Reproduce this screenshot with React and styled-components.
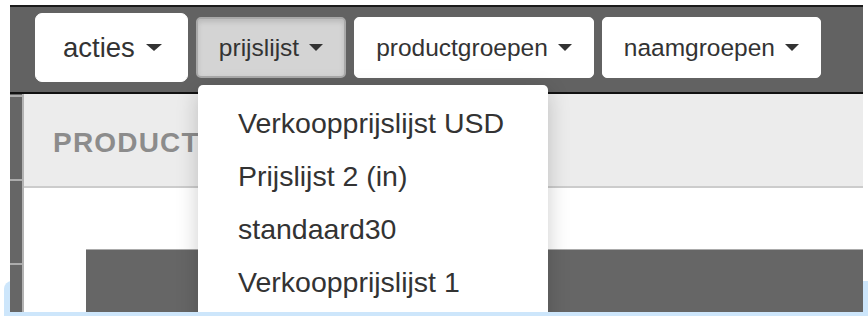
import React from 'react';
import styled, { createGlobalStyle } from 'styled-components';

const GlobalStyle = createGlobalStyle`
  html, body {
    margin: 0;
    padding: 0;
    background: #ffffff;
    font-family: "Liberation Sans", Arial, sans-serif;
  }
`;

const Page = styled.div`
  position: relative;
  width: 868px;
  height: 316px;
  overflow: hidden;
  background: #ffffff;
`;

const FocusGlow = styled.div`
  position: absolute;
  left: 4px;
  top: 281px;
  right: -12px;
  height: 80px;
  background: #cde6fb;
  border-radius: 8px;
`;

const Frame = styled.div`
  position: relative;
  z-index: 1;
  margin: 5px 5px 0 10px;
  height: 307px;
  overflow: hidden;
  display: flex;
  flex-direction: column;
`;

const Toolbar = styled.div`
  display: flex;
  align-items: center;
  gap: 8px;
  height: 69px;
  padding: 6px 0 10px 25px;
  background: #626262;
  border-top: 2px solid #1c1c1c;
  border-bottom: 2px solid #111111;
`;

const Button = styled.button`
  display: flex;
  align-items: center;
  gap: ${(p) => (p.$large ? '11px' : '10px')};
  height: ${(p) => (p.$large ? '69px' : '61px')};
  padding: ${(p) => (p.$large ? '0 25px 0 27px' : '0 21px')};
  font-family: "Liberation Sans", Arial, sans-serif;
  font-size: ${(p) => (p.$large ? '27.5px' : '24.5px')};
  color: #333333;
  background: ${(p) => (p.$active ? '#d4d4d4' : '#ffffff')};
  border: ${(p) => (p.$active ? '2px solid #a9a9a9' : '1px solid #ffffff')};
  border-radius: ${(p) => (p.$large ? '7px' : '5px')};
  box-shadow: ${(p) => (p.$active ? 'inset 0 3px 5px rgba(0,0,0,0.12)' : 'none')};
  cursor: pointer;
`;

const Caret = styled.span`
  width: 0;
  height: 0;
  border-left: ${(p) => (p.$large ? '8.5px' : '7px')} solid transparent;
  border-right: ${(p) => (p.$large ? '8.5px' : '7px')} solid transparent;
  border-top: 7px solid #333333;
`;

const Body = styled.div`
  flex: 1;
  display: flex;
  min-height: 0;
`;

const Sidebar = styled.div`
  width: 12px;
  flex-shrink: 0;
  border-right: 2px solid #b3b3b3;
  background: repeating-linear-gradient(
    to bottom,
    #666666 0,
    #666666 1px,
    #acacac 1px,
    #acacac 3px,
    #666666 3px,
    #666666 84px
  );
`;

const Main = styled.div`
  flex: 1;
  display: flex;
  flex-direction: column;
`;

const Header = styled.div`
  height: 94px;
  display: flex;
  align-items: center;
  padding-left: 29px;
  padding-top: 6px;
  box-sizing: border-box;
  background: #ececec;
  border-bottom: 2px solid #cccccc;
`;

const Title = styled.h2`
  margin: 0;
  font-size: 28px;
  font-weight: bold;
  color: #8c8c8c;
  letter-spacing: 1.2px;
`;

const Content = styled.div`
  flex: 1;
  display: flex;
  flex-direction: column;
  padding: 61px 0 0 62px;
  background: #ffffff;
`;

const DarkPanel = styled.div`
  flex: 1;
  background: #666666;
  border-top: 1px solid #ababab;
`;

const Dropdown = styled.ul`
  position: absolute;
  z-index: 2;
  left: 188px;
  top: 80px;
  width: 350px;
  height: 300px;
  margin: 0;
  padding: 12px 0;
  list-style: none;
  background: #ffffff;
  border-radius: 5px;
  box-shadow: 0 6px 22px rgba(0, 0, 0, 0.2);
`;

const Item = styled.li`
  padding: 0 40px;
  font-size: 28.5px;
  line-height: 53px;
  color: #333333;
  white-space: nowrap;
`;

const menus = [
  { label: 'prijslijst', active: true },
  { label: 'productgroepen' },
  { label: 'naamgroepen' },
];

const prijslijsten = [
  'Verkoopprijslijst USD',
  'Prijslijst 2 (in)',
  'standaard30',
  'Verkoopprijslijst 1',
];

const App = () => {
  return (
    <Page>
      <GlobalStyle />
      <FocusGlow />
      <Frame>
        <Toolbar>
          <Button $large>
            acties <Caret $large />
          </Button>
          {menus.map((m) => (
            <Button key={m.label} $active={m.active}>
              {m.label} <Caret />
            </Button>
          ))}
        </Toolbar>
        <Body>
          <Sidebar />
          <Main>
            <Header>
              <Title>PRODUCTEN</Title>
            </Header>
            <Content>
              <DarkPanel />
            </Content>
          </Main>
        </Body>
        <Dropdown>
          {prijslijsten.map((p) => (
            <Item key={p}>{p}</Item>
          ))}
        </Dropdown>
      </Frame>
    </Page>
  );
};

export default App;
